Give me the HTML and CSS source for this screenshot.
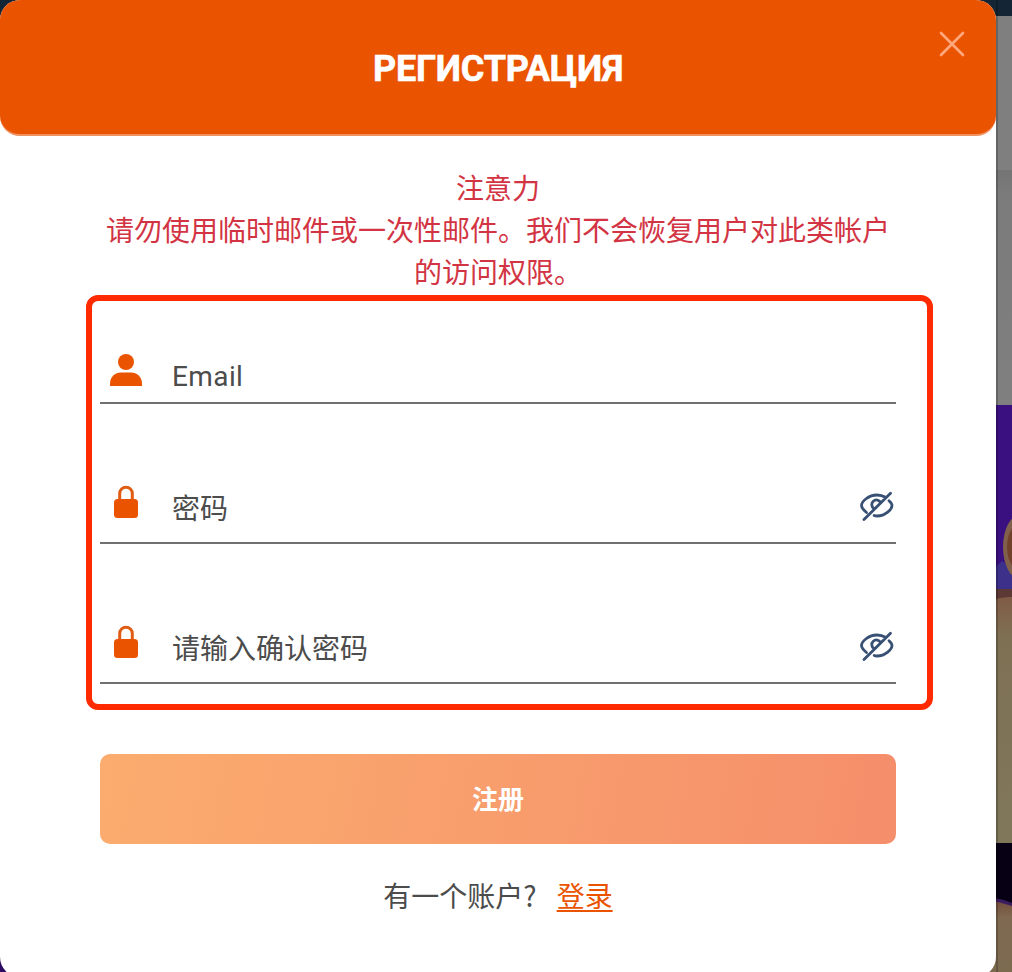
FILE: index.html
```html
<!DOCTYPE html>
<html lang="zh-CN">
<head>
<meta charset="utf-8">
<title>Регистрация</title>
<link rel="stylesheet" href="styles.css">
</head>
<body>
<svg class="backdrop" viewBox="0 0 1012 972" aria-hidden="true">
  <defs>
    <linearGradient id="sand" x1="0" y1="0" x2="0" y2="1">
      <stop offset="0" stop-color="#805b45"/>
      <stop offset=".16" stop-color="#7e7053"/>
      <stop offset="1" stop-color="#80775b"/>
    </linearGradient>
    <linearGradient id="low" x1="0" y1="0" x2="0" y2="1">
      <stop offset="0" stop-color="#754c3c"/>
      <stop offset=".25" stop-color="#7f6a50"/>
      <stop offset="1" stop-color="#7d6b50"/>
    </linearGradient>
    <linearGradient id="panel" x1="0" y1="0" x2="0" y2="1">
      <stop offset="0" stop-color="#747474"/>
      <stop offset=".1" stop-color="#7b7b7b"/>
      <stop offset="1" stop-color="#7f7f7f"/>
    </linearGradient>
  </defs>
  <rect width="1012" height="972" fill="#2d0b62"/>
  <rect width="1012" height="16" fill="#142635"/>
  <rect x="990" y="16" width="22" height="154" fill="#7f7f7f"/>
  <rect x="990" y="170" width="22" height="235" fill="url(#panel)"/>
  <rect x="990" y="405" width="22" height="185" fill="#3a0f80"/>
  <path d="M990 572l12-11 10 6v24h-22z" fill="#3c308a"/>
  <ellipse cx="1020" cy="547" rx="17" ry="32" fill="#80604b"/>
  <ellipse cx="1021" cy="547" rx="14" ry="24" fill="#71412c"/>
  <path d="M990 589h22v12h-22z" fill="#5c3934"/>
  <path d="M990 601q10-4 22-4v246h-22z" fill="url(#sand)"/>
  <rect x="990" y="843" width="22" height="65" fill="#070014"/>
  <path d="M990 897q12 2 22 6v69h-22z" fill="#3c1c60"/>
  <path d="M990 900q12 3 22 6v66h-22z" fill="url(#low)"/>
  <rect x="996" width="2" height="972" fill="#000" opacity=".2"/>
</svg>
<main class="modal">
  <header class="modal-header">
    <h1 class="modal-title">РЕГИСТРАЦИЯ</h1>
    <button class="close" type="button" aria-label="Close">
      <svg width="26" height="26" viewBox="0 0 26 26"><path d="M2 2l22 22M24 2L2 24" fill="none" stroke="#ffa77d" stroke-width="2.6" stroke-linecap="round"/></svg>
    </button>
  </header>
  <section class="notice">
    <div>注意力</div>
    <div>请勿使用临时邮件或一次性邮件。我们不会恢复用户对此类帐户的访问权限。</div>
  </section>
  <form class="fields">
    <div class="field field-first">
      <svg class="field-icon" width="32" height="34" viewBox="0 0 32 34" fill="#ea5400"><circle cx="16" cy="9" r="8"/><path d="M0 33v-2.500C0 24 5 19.500 11 19.500h10c6 0 11 4.500 11 11V33z"/></svg>
      <span class="label label-latin">Email</span>
    </div>
    <div class="field">
      <svg class="field-icon" width="32" height="34" viewBox="0 0 32 34" fill="#ea5400"><path d="M9.700 15V8.500a6.300 6.300 0 0 1 12.600 0V15" fill="none" stroke="#df5c12" stroke-width="3"/><rect x="4" y="14" width="24" height="19" rx="3.500"/></svg>
      <span class="label">密码</span>
      <svg class="eye" width="36" height="32" viewBox="0 0 36 32" fill="none" stroke="#385074" stroke-width="2.800" stroke-linecap="round" stroke-linejoin="round"><path d="M7.500 22.500C4.500 20 2.500 17.500 2.500 15.500 2.500 11.500 9.500 5 18 5c3.500 0 6 .8 8.500 2.300M30 10.800c1.800 1.700 3 3.500 3 4.700 0 3.700-6.500 10.500-15 10.500-1 0-1.800-.1-2.800-.5M5 29.500L31.500 3.200M15 18.500a4.600 4.600 0 1 1 6.500-6"/></svg>
    </div>
    <div class="field">
      <svg class="field-icon" width="32" height="34" viewBox="0 0 32 34" fill="#ea5400"><path d="M9.700 15V8.500a6.300 6.300 0 0 1 12.600 0V15" fill="none" stroke="#df5c12" stroke-width="3"/><rect x="4" y="14" width="24" height="19" rx="3.500"/></svg>
      <span class="label">请输入确认密码</span>
      <svg class="eye" width="36" height="32" viewBox="0 0 36 32" fill="none" stroke="#385074" stroke-width="2.800" stroke-linecap="round" stroke-linejoin="round"><path d="M7.500 22.500C4.500 20 2.500 17.500 2.500 15.500 2.500 11.500 9.500 5 18 5c3.500 0 6 .8 8.500 2.300M30 10.800c1.800 1.700 3 3.500 3 4.700 0 3.700-6.500 10.500-15 10.500-1 0-1.800-.1-2.800-.5M5 29.500L31.500 3.200M15 18.500a4.600 4.600 0 1 1 6.500-6"/></svg>
    </div>
  </form>
  <button class="submit" type="button">注册</button>
  <p class="login"><span>有一个账户?</span><a class="login-link" href="#">登录</a></p>
</main>
</body>
</html>
```
FILE: styles.css
```css
* { box-sizing: border-box; }
html, body { height: 100%; }
body {
  margin: 0;
  overflow: hidden;
  font-family: "Noto Sans CJK SC", sans-serif;
  color: #4c4c4c;
}
.backdrop {
  position: absolute;
  top: 0;
  left: 0;
  width: 1012px;
  height: 972px;
}
.modal {
  position: relative;
  width: 996px;
  height: 977px;
  background: #fff;
  border-radius: 20px;
}
.modal-header {
  display: flex;
  justify-content: center;
  height: 136px;
  padding-top: 44px;
  background: #ea5400;
  border-bottom: 2px solid #f0905f;
  border-radius: 20px;
}
.modal-title {
  margin: 0;
  font: 700 36px/50px Roboto, "Open Sans", sans-serif;
  letter-spacing: -0.2px;
  -webkit-text-stroke: 0.6px #fff;
  color: #fff;
  white-space: nowrap;
}
.close {
  position: absolute;
  top: 31px;
  right: 31px;
  width: 26px;
  height: 26px;
  padding: 0;
  border: 0;
  background: none;
}
.close svg { display: block; }
.notice {
  padding: 30px 100px 0;
  text-align: center;
  font-size: 28px;
  line-height: 42px;
  color: #d23443;
}
.fields {
  width: 847px;
  height: 415px;
  margin: 3px 0 0 86px;
  padding: 0 31px 0 8px;
  border: 6px solid #ff2a00;
  border-radius: 12px;
}
.field {
  display: flex;
  align-items: flex-end;
  height: 140px;
  padding: 0 0 23px 10px;
  border-bottom: 2px solid #707070;
}
.field-first {
  height: 103px;
  padding-bottom: 15px;
}
.field-icon { flex: none; margin-right: 30px; }
.label {
  flex: 1;
  font-size: 28px;
  line-height: 34px;
  position: relative;
  top: 5px;
}
.label-latin {
  top: 7px;
  font-family: Roboto, sans-serif;
  letter-spacing: 0.4px;
}
.eye { flex: none; margin-right: 1px; position: relative; top: 3px; }
.submit {
  display: block;
  width: 796px;
  height: 90px;
  margin: 44px 0 0 100px;
  padding: 0;
  border: 0;
  border-radius: 10px;
  background: linear-gradient(100deg, #fbac6e, #f58e6b);
  font: 700 26px/88px "Noto Sans CJK SC", sans-serif;
  color: #fff;
}
.submit { padding-bottom: 2px; }
.login {
  display: flex;
  justify-content: center;
  gap: 20px;
  margin: 30px 0 0;
  font-size: 28px;
  line-height: 42px;
}
.login-link {
  color: #ea5400;
  text-decoration: underline;
  text-decoration-thickness: 2px;
  text-underline-offset: 3px;
}
```
